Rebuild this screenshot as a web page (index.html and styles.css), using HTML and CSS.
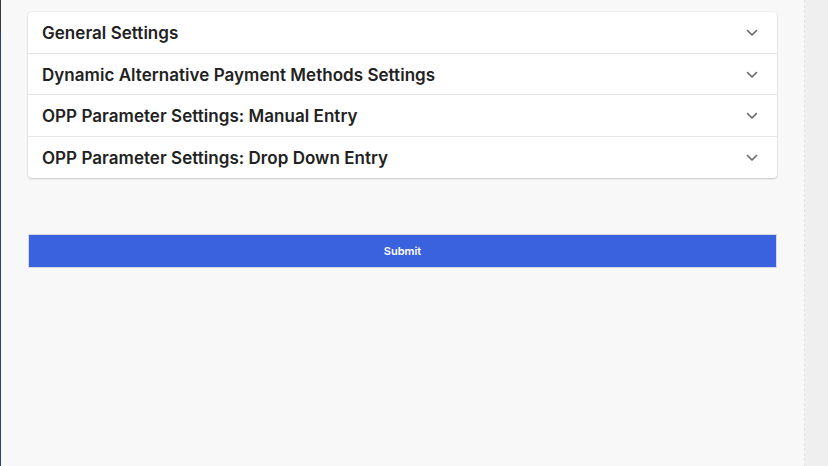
FILE: index.html
```html
<!DOCTYPE html>
<html lang="en">
<head>
<meta charset="utf-8">
<title>Settings</title>
<link rel="stylesheet" href="styles.css">
</head>
<body>
<div class="frame">
  <div class="edge"></div>
  <main class="content">
    <section class="accordion">
      <div class="panel">
        <span class="panel-title">General Settings</span>
        <svg class="chevron" viewBox="0 0 12 8" width="12" height="8"><path d="M1.5 1.5 L6 6 L10.5 1.5" fill="none" stroke="#666" stroke-width="1.6" stroke-linecap="round" stroke-linejoin="round"/></svg>
      </div>
      <div class="panel">
        <span class="panel-title">Dynamic Alternative Payment Methods Settings</span>
        <svg class="chevron" viewBox="0 0 12 8" width="12" height="8"><path d="M1.5 1.5 L6 6 L10.5 1.5" fill="none" stroke="#666" stroke-width="1.6" stroke-linecap="round" stroke-linejoin="round"/></svg>
      </div>
      <div class="panel">
        <span class="panel-title">OPP Parameter Settings: Manual Entry</span>
        <svg class="chevron" viewBox="0 0 12 8" width="12" height="8"><path d="M1.5 1.5 L6 6 L10.5 1.5" fill="none" stroke="#666" stroke-width="1.6" stroke-linecap="round" stroke-linejoin="round"/></svg>
      </div>
      <div class="panel">
        <span class="panel-title">OPP Parameter Settings: Drop Down Entry</span>
        <svg class="chevron" viewBox="0 0 12 8" width="12" height="8"><path d="M1.5 1.5 L6 6 L10.5 1.5" fill="none" stroke="#666" stroke-width="1.6" stroke-linecap="round" stroke-linejoin="round"/></svg>
      </div>
    </section>
    <button class="submit" type="button">Submit</button>
  </main>
  <aside class="gutter"></aside>
</div>
</body>
</html>
```

FILE: styles.css
```css
html, body {
  margin: 0;
  padding: 0;
  height: 100%;
}

body {
  background: #f8f8f8;
  font-family: Inter, "Noto Sans", "Liberation Sans", sans-serif;
  color: #222;
}

.frame {
  display: flex;
  height: 466px;
  overflow: hidden;
}

.edge {
  width: 1px;
  flex: none;
  background: linear-gradient(to bottom, #3a3a3a 0, #3a3a3a 33px, #2f3f78 33px, #2f3f78 100%);
}

.content {
  width: 804px;
  flex: none;
  box-sizing: border-box;
  padding: 12px 27px 0 27px;
  border-right: 1px dashed #e2e2e2;
}

.gutter {
  flex: 1;
  background: #efefef;
}

.accordion {
  background: #fff;
  border-radius: 4px;
  box-shadow: 0 1px 2px rgba(0, 0, 0, 0.18), 0 0 0 1px rgba(0, 0, 0, 0.03);
  width: 749px;
}

.panel {
  display: flex;
  align-items: center;
  justify-content: space-between;
  height: 41.5px;
  padding: 2px 19px 0 14px;
  box-sizing: border-box;
  border-bottom: 1px solid #e6e6e6;
}

.panel:last-child {
  border-bottom: none;
}

.panel-title {
  font-size: 17px;
  font-weight: 600;
  color: #222;
  letter-spacing: 0.04px;
}

.chevron {
  display: block;
}

.submit {
  display: block;
  margin-top: 56px;
  width: 749px;
  height: 34px;
  background: #3b62de;
  border: 1px solid #d8d8e0;
  box-sizing: border-box;
  color: #fff;
  font-family: Inter, "Noto Sans", "Liberation Sans", sans-serif;
  font-size: 11px;
  font-weight: 600;
  padding: 0 0 1px 0;
  cursor: pointer;
}
```
